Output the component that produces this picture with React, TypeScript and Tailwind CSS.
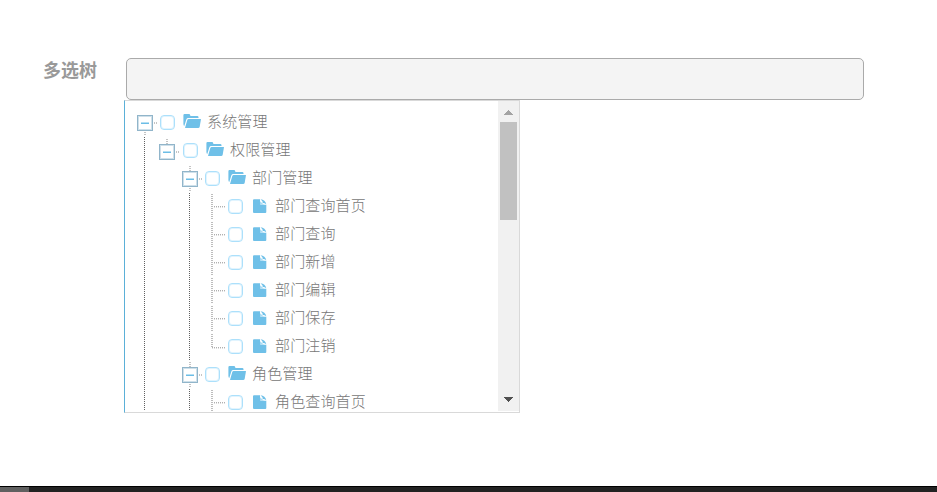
type Kind = 'root' | 'branch' | 'leaf' | 'last';
type Node = { label: string; depth: 0 | 1 | 2 | 3; kind: Kind; nudge?: number };

const nodes: Node[] = [
  { label: '系统管理', depth: 0, kind: 'root' },
  { label: '权限管理', depth: 1, kind: 'branch', nudge: 1 },
  { label: '部门管理', depth: 2, kind: 'branch' },
  { label: '部门查询首页', depth: 3, kind: 'leaf' },
  { label: '部门查询', depth: 3, kind: 'leaf' },
  { label: '部门新增', depth: 3, kind: 'leaf' },
  { label: '部门编辑', depth: 3, kind: 'leaf' },
  { label: '部门保存', depth: 3, kind: 'leaf' },
  { label: '部门注销', depth: 3, kind: 'last' },
  { label: '角色管理', depth: 2, kind: 'branch' },
  { label: '角色查询首页', depth: 3, kind: 'leaf' },
];

const guideWidth = ['w-[22px]', 'w-[23px]', 'w-[22px]'];
const connectorWidth = [24, 25, 24, 25];

function Guide({ depth }: { depth: number }) {
  return (
    <svg className={`h-7 shrink-0 ${guideWidth[depth]}`} shapeRendering="crispEdges">
      {depth !== 1 && <path d="M8.5 1V28" stroke="#606060" strokeDasharray="1 1" />}
    </svg>
  );
}

function Connector({ node }: { node: Node }) {
  const width = connectorWidth[node.depth];
  if (node.kind === 'leaf' || node.kind === 'last') {
    const bottom = node.kind === 'last' ? 16 : 28;
    return (
      <svg width={width} height="28" className="shrink-0" shapeRendering="crispEdges">
        <path d={`M9 2V${bottom}`} stroke="#bdbdbd" strokeWidth="2" strokeDasharray="1 1" />
        <path d={node.kind === 'last' ? 'M9 16.5H22' : 'M11 15.5H22'} stroke="#dedede" strokeDasharray="1 1" />
        <path d={node.kind === 'last' ? 'M9 15.5H22' : 'M11 14.5H22'} stroke="#b0b0b0" strokeDasharray="1 1" />
      </svg>
    );
  }
  const y = 7 + (node.nudge ?? 0);
  return (
    <svg width={width} height="28" className="shrink-0" shapeRendering="crispEdges">
      {node.kind === 'branch' && <path d={`M9 ${y - 5}V${y}`} stroke="#c4c4c4" strokeWidth="2" strokeDasharray="1 1" />}
      {node.depth !== 1 && <path d={`M9 ${y + 17}V28`} stroke="#c4c4c4" strokeWidth="2" strokeDasharray="1 1" />}
      <rect x="1.5" y={y + 0.5} width="15" height="15" fill="white" stroke="#91b5ca" />
      <rect x="2.5" y={y + 1.5} width="13" height="13" fill="none" stroke="#cfe0ea" />
      <path d={`M5 ${y + 8.5}H13`} stroke="#6cbde6" />
      <path d={`M5 ${y + 7.5}H13`} stroke="#b4dff3" />
      <path d={`M18 ${y + 8}H22`} stroke="#c4c4c4" strokeWidth="2" strokeDasharray="1 1" />
    </svg>
  );
}

function FolderIcon() {
  return (
    <svg width="18" height="16" viewBox="0 0 18 16" className="mb-[3px] shrink-0" fill="#6fc0e8">
      <path d="M.4 2.2Q.4 1 1.5 1H6Q7 1 7.2 2.2L7.5 3H14.3Q15.5 3 15.5 4.2V5H5.3Q3.8 5 3.3 6.4L1.3 13Q.4 12.5 .4 11Z" />
      <path d="M4.3 7Q4.6 6 5.7 6H18L16.7 13.8Q16.4 15 15.2 15H2Z" />
    </svg>
  );
}

function FileIcon() {
  return (
    <svg width="18" height="16" viewBox="0 0 18 16" className="shrink-0" fill="#6fc0e8">
      <path d="M2 2.2Q2 1.3 3 1.3H9V5.3Q9 6.8 10.5 6.8H15.3V14Q15.3 15 14.3 15H3Q2 15 2 14Z" />
      <path d="M9.5 1.3Q14.3 2 15.3 6.3Q13 4.5 11.7 5Q12.3 3.2 9.5 1.3Z" />
      <path d="M9 3.2L13 6.8H10.5Q9 6.8 9 5.3Z" fill="#a9daf3" />
    </svg>
  );
}

function TreeRow({ node }: { node: Node }) {
  const isLeaf = node.depth === 3;
  return (
    <li className="flex h-7 shrink-0 items-center">
      {Array.from({ length: node.depth }, (_, depth) => (
        <Guide key={depth} depth={depth} />
      ))}
      <Connector node={node} />
      <span className="mt-px h-[15px] w-[15px] shrink-0 rounded-[4px] border border-[#ace0fb] bg-white shadow-[inset_0_0_0_1px_#e2f4fe]" />
      <span className="ml-2 flex">{isLeaf ? <FileIcon /> : <FolderIcon />}</span>
      <span className="mb-[2px] ml-[6px] whitespace-nowrap text-[15px] leading-[26px] tracking-[0.15px]">{node.label}</span>
    </li>
  );
}

export default function App() {
  return (
    <div className="flex h-[492px] w-[937px] flex-col overflow-hidden bg-white font-['Noto_Sans_CJK_SC',sans-serif] text-[#777777]">
      <main className="flex flex-1 pt-[58px]">
        <label className="w-[124px] shrink-0 pl-[43px] text-[18px] font-bold leading-[22px] text-[#999999]">多选树</label>
        <div className="flex flex-col">
          <div className="ml-[2px] h-[42px] w-[738px] rounded-[5px] border border-[#aaaaaa] bg-[#f4f4f4]" />
          <div className="flex h-[313px] w-[396px] border border-[#d9d9d9] border-l-[#5bb0d8] bg-white">
            <ul className="flex h-[310px] flex-1 flex-col overflow-hidden pl-[11px] pt-[7px] font-light">
              {nodes.map((node, i) => (
                <TreeRow key={i} node={node} />
              ))}
            </ul>
            <div className="flex h-[310px] w-[21px] flex-col items-center bg-[#f1f1f1]">
              <svg width="9" height="5" className="mt-[9px] shrink-0" shapeRendering="crispEdges">
                <path d="M4.5 0L9 5H0Z" fill="#a3a3a3" />
              </svg>
              <div className="mt-[7px] h-[98px] w-[17px] bg-[#c1c1c1]" />
              <svg width="9" height="5" className="mb-[9px] mt-auto shrink-0" shapeRendering="crispEdges">
                <path d="M0 0H9L4.5 5Z" fill="#505050" />
              </svg>
            </div>
          </div>
        </div>
      </main>
      <footer className="flex h-[6px] shrink-0 border-t border-black bg-[#222222]">
        <div className="w-[29px] bg-[#606060]" />
      </footer>
    </div>
  );
}
